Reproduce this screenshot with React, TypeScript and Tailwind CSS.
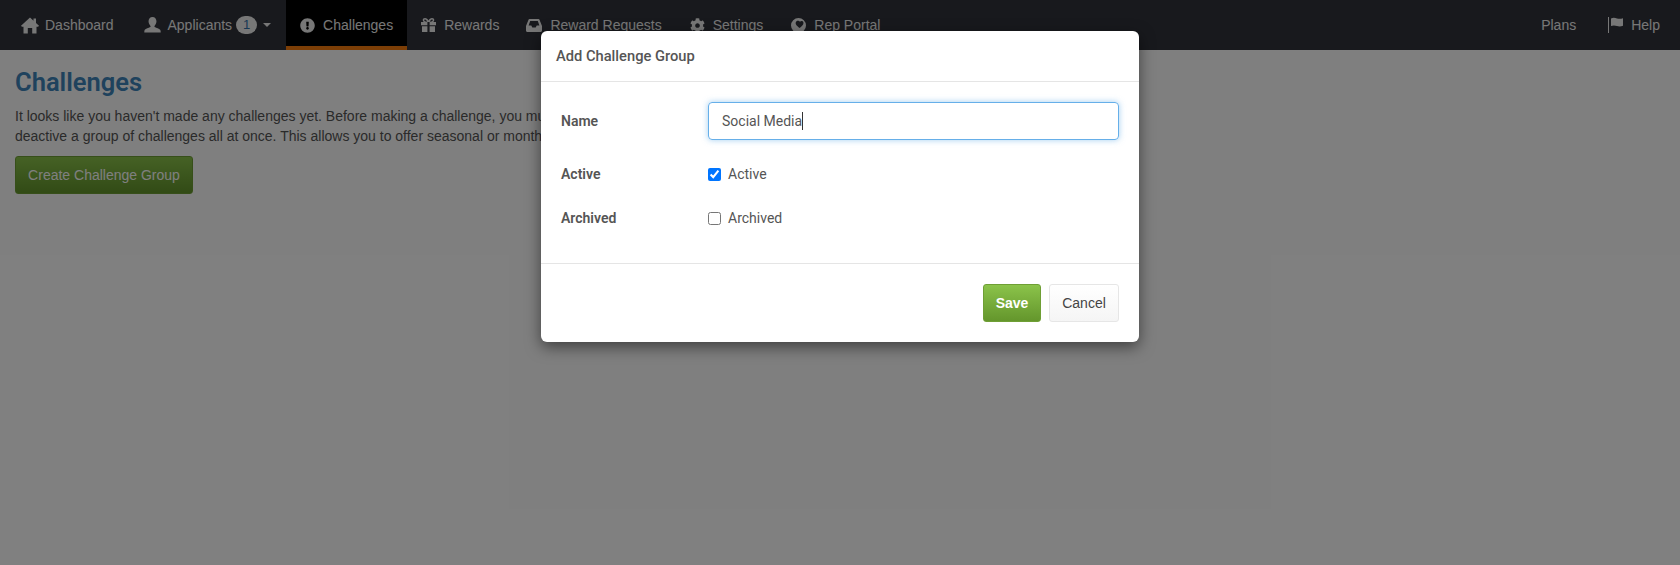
import { FaExclamationCircle, FaCog } from 'react-icons/fa';
import { ReactNode } from 'react';

function HomeIcon() {
  return (
    <svg viewBox="0 0 18 17" className="w-[18px] h-[17px] fill-current">
      <path d="M9 0.5l3.5 3.2V1.5h2.5v4.5L18 8.8l-0.9 0.9H15.5V16.5h-4.3v-5.5H6.8v5.5H2.5V9.7H0.9L0 8.8z" />
    </svg>
  );
}

function UserIcon() {
  return (
    <svg viewBox="0 0 18 18" className="w-[17px] h-[18px] fill-current">
      <path d="M9 0.5c2.6 0 4.2 2 4.2 4.6 0 2-0.9 3.7-1.9 4.7-0.4 0.4-0.4 1 0 1.3 0.9 0.8 5.7 1.6 6.2 3.6 0.2 0.8 0.2 1.7 0.2 2.3H0.3c0-0.6 0-1.5 0.2-2.3 0.5-2 5.3-2.8 6.2-3.6 0.4-0.3 0.4-0.9 0-1.3-1-1-1.9-2.7-1.9-4.7C4.8 2.5 6.4 0.5 9 0.5z" />
    </svg>
  );
}

function GiftIcon() {
  return (
    <svg viewBox="0 0 15 14" className="w-[15px] h-[14px] fill-current">
      <path fillRule="evenodd" d="M4 0c1.5 0 2.8 1 3.5 2.4C8.2 1 9.5 0 11 0c1.4 0 2.3 0.8 2.3 2 0 0.8-0.4 1.5-1 2H15v3.2H8.6V4H6.4v3.2H0V4h2.7c-0.6-0.5-1-1.2-1-2C1.7 0.8 2.6 0 4 0zM4 1.4c-0.5 0-0.9 0.2-0.9 0.7 0 0.8 1.2 1.7 3 1.7C5.8 2.5 5 1.4 4 1.4zM11 1.4c-1 0-1.8 1.1-2.1 2.4 1.8 0 3-0.9 3-1.7 0-0.5-0.4-0.7-0.9-0.7z" />
      <path d="M1 8.2h5.4V14H1zM8.6 8.2H14V14H8.6z" />
    </svg>
  );
}

function InboxIcon() {
  return (
    <svg viewBox="0 0 16 14" className="w-[16px] h-[14px] fill-current">
      <path fillRule="evenodd" d="M3.5 1h9c0.5 0 0.8 0.2 1 0.7L16 8v4.5c0 0.8-0.6 1.5-1.5 1.5h-13C0.6 14 0 13.3 0 12.5V8l2.5-6.3C2.7 1.2 3 1 3.5 1zM4.2 3L2.6 7.6h2.7l1 2h3.4l1-2h2.7L11.8 3z" />
    </svg>
  );
}

function GlobeIcon() {
  return (
    <svg viewBox="0 0 15 15" className="w-[15px] h-[15px] fill-current">
      <path fillRule="evenodd" d="M7.5 0a7.5 7.5 0 1 1 0 15a7.5 7.5 0 0 1 0-15zM5.5 3.2C4.6 4 4.4 5.3 5 6.4c0.7 1.2 2.2 2.4 3.6 3.7 1.2-1.1 3-2.6 3.6-3.9 0.5-1.2 0.3-2.3-0.6-3-1-0.5-2-0.2-2.7 0.5-0.6-0.7-2.2-1.2-3.4-0.5z" />
    </svg>
  );
}

function FlagIcon() {
  return (
    <svg viewBox="0 0 15 16" className="w-[15px] h-[16px] fill-current">
      <rect x="0" y="0" width="1" height="16" />
      <path d="M3 1.5c2-1 4-0.8 6 0 2 0.6 4 0.4 6-0.3v7.6c-2 0.8-4 1-6 0.3-2-0.8-4-0.9-6 0z" />
    </svg>
  );
}

function NavItem({ icon, label, active, className = 'px-[14px] gap-2', children }: { icon: ReactNode; label: string; active?: boolean; className?: string; children?: ReactNode }) {
  return (
    <a className={`flex items-center h-[50px] ${active ? 'bg-black pt-[4px] border-b-4 border-[#f97c0c]' : ''} ${className}`}>
      <span className="flex items-center justify-center">{icon}</span>
      <span>{label}</span>
      {children}
    </a>
  );
}

export default function App() {
  return (
    <div className="relative h-[565px] overflow-hidden bg-white text-[14px] text-[#555] font-['Liberation_Sans',Arial,sans-serif]">
      {/* Navbar */}
      <nav className="flex items-center justify-between h-[50px] bg-[#30323a] text-[#eeeeee] pl-[7px] pr-[6px]">
        <div className="flex items-center">
          <NavItem className="pl-[14px] pr-[16px] gap-[6px]" icon={<HomeIcon />} label="Dashboard" />
          <NavItem className="pl-[14px] pr-[15px] gap-[7px]" icon={<UserIcon />} label="Applicants">
            <span className="-ml-[3px] w-[21px] h-[18px] rounded-full bg-[#eeeeee] text-[#2f6ea8] text-[13px] leading-[18px] text-center">1</span>
            <span className="-ml-[1px] w-0 h-0 border-x-4 border-x-transparent border-t-4 border-t-[#eeeeee]" />
          </NavItem>
          <NavItem active icon={<FaExclamationCircle size={15} />} label="Challenges" />
          <NavItem className="pl-[14px] pr-[13px] gap-2" icon={<GiftIcon />} label="Rewards" />
          <NavItem icon={<InboxIcon />} label="Reward Requests" />
          <NavItem icon={<FaCog size={15} />} label="Settings" />
          <NavItem icon={<GlobeIcon />} label="Rep Portal" />
        </div>
        <div className="flex items-center">
          <a className="pl-[14px] pr-[18px]">Plans</a>
          <NavItem icon={<FlagIcon />} label="Help" />
        </div>
      </nav>

      {/* Page */}
      <main className="px-[15px] pt-[17px]">
        <h1 className="text-[25.5px] leading-[30px] font-semibold text-[#3f85ba] font-['Roboto',sans-serif]">Challenges</h1>
        <p className="mt-[9px] leading-[20px] whitespace-nowrap">
          It looks like you haven't made any challenges yet. Before making a challenge, you must create a group. Groups let you activate or
          <br />
          deactive a group of challenges all at once. This allows you to offer seasonal or monthly challenges.
        </p>
        <button className="mt-[10px] h-[38px] w-[178px] rounded-[3px] border border-[#6f9f35] bg-linear-to-b from-[#8bc34a] to-[#64962c] text-white">
          Create Challenge Group
        </button>
      </main>

      {/* Backdrop */}
      <div className="absolute inset-0 bg-black/50" />

      {/* Modal */}
      <div className="absolute left-[541px] top-[31px] w-[598px] h-[311px] flex flex-col rounded-[6px] bg-white shadow-[0_5px_15px_rgba(0,0,0,0.5)] text-[#555] font-['Roboto',sans-serif]">
        <div className="h-[51px] flex items-center px-[15px] border-b border-[#e5e5e5] text-[14.7px] font-medium">Add Challenge Group</div>
        <div className="flex-1 pt-[20px] px-5">
          <div className="flex items-center h-[38px]">
            <label className="w-[147px] font-semibold">Name</label>
            <div className="flex-1 h-[38px] flex items-center px-[13px] rounded-[4px] border border-[#66afe9] shadow-[0_0_6px_rgba(102,175,233,0.6)]">
              <span>Social Media</span>
              <span className="w-px h-[18px] bg-[#333]" />
            </div>
          </div>
          <div className="flex items-center mt-[25px] h-[18px]">
            <label className="w-[147px] font-semibold">Active</label>
            <input type="checkbox" checked readOnly className="m-0 w-[13px] h-[13px]" />
            <span className="ml-[7px]">Active</span>
          </div>
          <div className="flex items-center mt-[26px] h-[18px]">
            <label className="w-[147px] font-semibold">Archived</label>
            <input type="checkbox" readOnly className="m-0 w-[13px] h-[13px]" />
            <span className="ml-[7px]">Archived</span>
          </div>
        </div>
        <div className="h-[79px] flex items-start justify-end gap-2 pt-[20px] pr-5 border-t border-[#e5e5e5] font-['Liberation_Sans',Arial,sans-serif]">
          <button className="w-[58px] h-[38px] rounded-[3px] border border-[#6f9f35] bg-linear-to-b from-[#8bc34a] to-[#64962c] text-white font-bold">Save</button>
          <button className="w-[70px] h-[38px] rounded-[3px] border border-[#e6e6e6] bg-linear-to-b from-white to-[#f5f5f5] text-[#444]">Cancel</button>
        </div>
      </div>
    </div>
  );
}
